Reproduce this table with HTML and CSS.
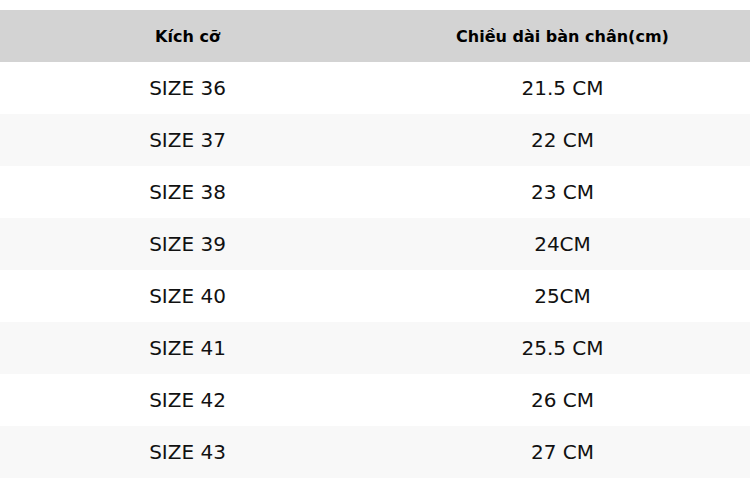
FILE: index.html
```html
<!DOCTYPE html>
<html lang="vi">
<head>
<meta charset="utf-8">
<link rel="stylesheet" href="styles.css">
</head>
<body>
<table class="size-table">
  <thead>
    <tr><th>Kích cỡ</th><th>Chiều dài bàn chân(cm)</th></tr>
  </thead>
  <tbody>
    <tr><td>SIZE 36</td><td>21.5 CM</td></tr>
    <tr><td>SIZE 37</td><td>22 CM</td></tr>
    <tr><td>SIZE 38</td><td>23 CM</td></tr>
    <tr><td>SIZE 39</td><td>24CM</td></tr>
    <tr><td>SIZE 40</td><td>25CM</td></tr>
    <tr><td>SIZE 41</td><td>25.5 CM</td></tr>
    <tr><td>SIZE 42</td><td>26 CM</td></tr>
    <tr><td>SIZE 43</td><td>27 CM</td></tr>
  </tbody>
</table>
</body>
</html>
```

FILE: styles.css
```css
html, body {
  margin: 0;
  padding: 0;
  background: #ffffff;
}
body {
  font-family: "DejaVu Sans", sans-serif;
  color: #111111;
  padding-top: 10px;
}
.size-table {
  width: 100%;
  border-collapse: collapse;
  table-layout: fixed;
}
.size-table th,
.size-table td {
  height: 52px;
  padding: 0;
  text-align: center;
  vertical-align: middle;
}
.size-table th {
  background: #d3d3d3;
  font-size: 16px;
  font-weight: bold;
  color: #000000;
}
.size-table td {
  font-size: 20px;
  font-weight: normal;
}
.size-table tbody tr:nth-child(even) td {
  background: #f8f8f8;
}
```
